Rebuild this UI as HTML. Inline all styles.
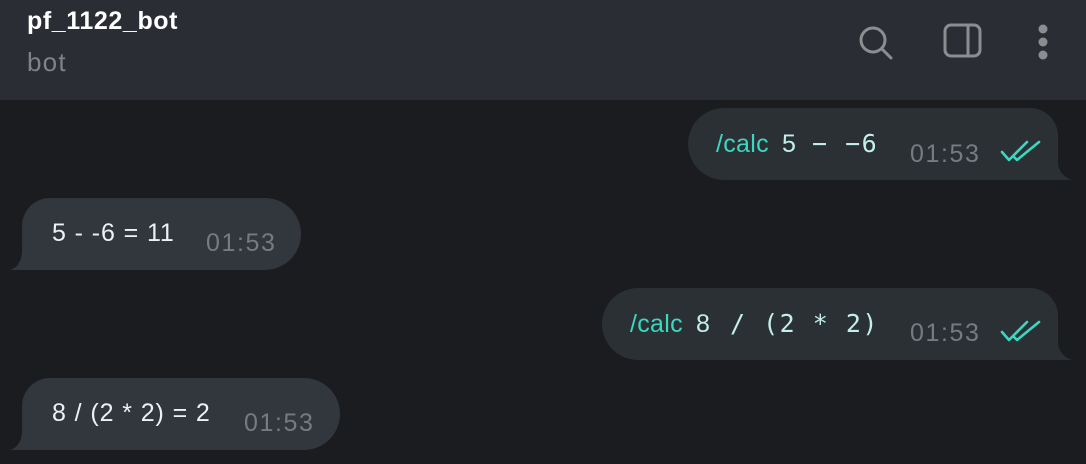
<!DOCTYPE html>
<html><head><meta charset="utf-8"><style>
*{margin:0;padding:0;box-sizing:border-box}
body{width:1086px;height:464px;background:#1b1c20;position:relative;overflow:hidden;font-family:"Liberation Sans",sans-serif}
.hdr{position:absolute;left:0;top:0;width:1086px;height:100px;background:#2a2e34}
.t{position:absolute;white-space:nowrap}
.title{left:27px;top:7px;font-size:25px;font-weight:bold;color:#fff;letter-spacing:0.6px}
.sub{left:27px;top:47px;font-size:26px;color:#7f8388;letter-spacing:1.2px}
.m{font-size:25px;color:#eef0f2;letter-spacing:0.9px}
.cmd{font-size:25px;color:#3ad8c0;letter-spacing:0.3px}
.code{font-size:25px;color:#c2f0e8;font-family:"DejaVu Sans Mono",monospace;letter-spacing:1.5px}
.tm{font-size:25px;color:#747b83;letter-spacing:1.6px}
svg{position:absolute;left:0;top:0}
</style></head><body>
<div class="hdr"></div>
<div class="t title">pf_1122_bot</div>
<div class="t sub">bot</div>
<svg width="1086" height="464">
<g fill="none" stroke="#8b8d90" stroke-width="3" stroke-linecap="round">
<circle cx="873" cy="40" r="12"/><line x1="882" y1="49" x2="891" y2="58"/>
<rect x="945" y="25" width="35" height="31" rx="6"/><line x1="968" y1="25" x2="968" y2="56"/>
</g>
<g fill="#8b8d90"><circle cx="1043" cy="29" r="4.5"/><circle cx="1043" cy="42" r="4.5"/><circle cx="1043" cy="55" r="4.5"/></g>
<g fill="#2b3034">
<path d="M724 108 H1030 A28 28 0 0 1 1058 136 V164 Q1060 176 1072 180 H724 A36 36 0 0 1 724 108 Z"/>
<path d="M638 288 H1030 A28 28 0 0 1 1058 316 V344 Q1060 356 1072 360 H638 A36 36 0 0 1 638 288 Z"/>
</g>
<g fill="#32363d">
<path d="M50 198 H265 A36 36 0 0 1 265 270 H10 Q22 266 22 250 V226 A28 28 0 0 1 50 198 Z"/>
<path d="M50 378 H304 A36 36 0 0 1 304 450 H10 Q22 446 22 430 V406 A28 28 0 0 1 50 378 Z"/>
</g>
<g fill="none" stroke="#3ad8c0" stroke-width="2.6" stroke-linecap="round" stroke-linejoin="round">
<path d="M1002 152 L1009 160 L1027 142"/><path d="M1014 157 L1017 160 L1039 142"/>
<path d="M1002 332 L1009 340 L1027 322"/><path d="M1014 337 L1017 340 L1039 322"/>
</g>
</svg>
<div class="t cmd" style="left:716px;top:130px">/calc</div>
<div class="t m" style="left:782px;top:130px;color:#c2f0e8">5</div>
<div class="t code" style="left:812px;top:129px">−  −6</div>
<div class="t tm" style="left:910px;top:140px">01:53</div>
<div class="t m" style="left:52px;top:219px">5 - -6 = 11</div>
<div class="t tm" style="left:206px;top:229px">01:53</div>
<div class="t cmd" style="left:630px;top:310px">/calc</div>
<div class="t m" style="left:696px;top:310px;color:#c2f0e8">8</div>
<div class="t code" style="left:730px;top:309px">/ (2 * 2)</div>
<div class="t tm" style="left:910px;top:319px">01:53</div>
<div class="t m" style="left:52px;top:399px">8 / (2 * 2) = 2</div>
<div class="t tm" style="left:244px;top:409px">01:53</div>
</body></html>
